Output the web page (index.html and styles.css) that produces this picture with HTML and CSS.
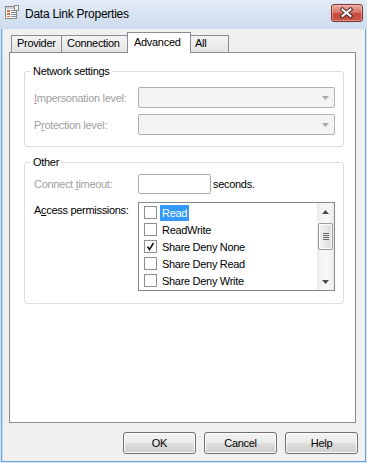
FILE: index.html
```html
<!DOCTYPE html>
<html>
<head>
<meta charset="utf-8">
<title>Data Link Properties</title>
<link rel="stylesheet" href="styles.css">
</head>
<body>
<div class="frame">
  <div class="titlebar">
    <svg class="appicon" width="14" height="14" viewBox="0 0 14 14">
      <rect x="0.5" y="1.5" width="11" height="12" fill="#fdfdfd" stroke="#8a8a8a"/>
      <rect x="1" y="2" width="10" height="2" fill="#c9ced6"/>
      <rect x="2" y="5" width="3" height="2" fill="#e0703a"/>
      <rect x="2" y="8" width="3" height="2" fill="#e0703a"/>
      <rect x="2" y="11" width="3" height="1" fill="#e0703a"/>
      <rect x="6" y="5" width="5" height="1" fill="#7d8ea6"/>
      <rect x="6" y="7" width="5" height="1" fill="#7d8ea6"/>
      <rect x="6" y="9" width="5" height="1" fill="#7d8ea6"/>
      <rect x="6" y="11" width="5" height="1" fill="#7d8ea6"/>
      <rect x="9.5" y="0.5" width="4" height="5" fill="#f4f4f4" stroke="#8a8a8a"/>
    </svg>
    <span class="title">Data Link Properties</span>
    <div class="close">
      <svg width="32" height="18" viewBox="0 0 32 18">
        <path d="M11.5 5.5 L19.5 12 M19.5 5.5 L11.5 12" stroke="#4a2a2a" stroke-width="4" stroke-linecap="square" fill="none"/>
        <path d="M11.5 5.5 L19.5 12 M19.5 5.5 L11.5 12" stroke="#ffffff" stroke-width="2" stroke-linecap="square" fill="none"/>
      </svg>
    </div>
  </div>

  <div class="client">
    <div class="tabs">
      <div class="tab t-provider">Provider</div>
      <div class="tab t-connection">Connection</div>
      <div class="tab active t-advanced">Advanced</div>
      <div class="tab t-all">All</div>
    </div>

    <div class="panel">
      <fieldset class="group g-network">
        <legend>Network settings</legend>
        <div class="gbody gb-network">
          <div class="row">
            <span class="label disabled"><u>I</u>mpersonation level:</span>
            <div class="combo">
              <svg width="7" height="4" viewBox="0 0 7 4"><polygon points="0,0 7,0 3.5,4" fill="#a8a8a8"/></svg>
            </div>
          </div>
          <div class="row">
            <span class="label disabled">P<u>r</u>otection level:</span>
            <div class="combo">
              <svg width="7" height="4" viewBox="0 0 7 4"><polygon points="0,0 7,0 3.5,4" fill="#a8a8a8"/></svg>
            </div>
          </div>
        </div>
      </fieldset>

      <fieldset class="group g-other">
        <legend>Other</legend>
        <div class="gbody gb-other">
          <div class="row row-timeout">
            <span class="label disabled">Connect <u>t</u>imeout:</span>
            <div class="textbox"></div>
            <span class="suffix">seconds.</span>
          </div>
          <div class="row row-access">
            <span class="label">A<u>c</u>cess permissions:</span>
            <div class="listbox">
              <div class="items">
                <div class="item"><span class="cb"></span><span class="text sel">Read</span></div>
                <div class="item"><span class="cb"></span><span class="text">ReadWrite</span></div>
                <div class="item"><span class="cb">
                  <svg width="11" height="11" viewBox="0 0 11 11"><path d="M2.5 5.5 L4.5 8.5 L8.5 2" stroke="#1a1a1a" stroke-width="1.6" fill="none"/></svg>
                </span><span class="text">Share Deny None</span></div>
                <div class="item"><span class="cb"></span><span class="text">Share Deny Read</span></div>
                <div class="item"><span class="cb"></span><span class="text">Share Deny Write</span></div>
              </div>
              <div class="scrollbar">
                <div class="sb-btn">
                  <svg width="7" height="4" viewBox="0 0 7 4"><polygon points="0,4 7,4 3.5,0" fill="#4e4e4e"/></svg>
                </div>
                <div class="thumb">
                  <svg width="6" height="8" viewBox="0 0 6 8">
                    <rect x="0" y="0" width="6" height="1" fill="#6a6a6a"/>
                    <rect x="0" y="2" width="6" height="1" fill="#6a6a6a"/>
                    <rect x="0" y="4" width="6" height="1" fill="#6a6a6a"/>
                    <rect x="0" y="6" width="6" height="1" fill="#6a6a6a"/>
                  </svg>
                </div>
                <div class="sb-track"></div>
                <div class="sb-btn">
                  <svg width="7" height="4" viewBox="0 0 7 4"><polygon points="0,0 7,0 3.5,4" fill="#4e4e4e"/></svg>
                </div>
              </div>
            </div>
          </div>
        </div>
      </fieldset>
    </div>

    <div class="buttons">
      <div class="btn">OK</div>
      <div class="btn">Cancel</div>
      <div class="btn">Help</div>
    </div>
  </div>
</div>
</body>
</html>
```

FILE: styles.css
```css
* { box-sizing: border-box; }

html, body {
  margin: 0;
  padding: 0;
}

body {
  width: 367px;
  height: 463px;
  overflow: hidden;
  background: #ffffff;
  font-family: "Liberation Sans", Arial, sans-serif;
  font-size: 11px;
  letter-spacing: -0.3px;
  color: #000;
}

.frame {
  width: 367px;
  height: 463px;
  display: flex;
  flex-direction: column;
  background: #d9e6f4;
}

/* ---------- title bar ---------- */
.titlebar {
  height: 29px;
  flex: none;
  display: flex;
  align-items: flex-start;
  background: linear-gradient(#e3ecf7, #cddcee);
}

.appicon {
  flex: none;
  margin: 5px 0 0 5px;
}

.title {
  margin: 7px 0 0 6px;
  font-size: 12px;
  letter-spacing: -0.25px;
  line-height: 15px;
  color: #000;
}

.close {
  flex: none;
  width: 32px;
  height: 18px;
  margin: 4px 4px 0 auto;
  border: 1px solid #7b3530;
  border-radius: 3px;
  overflow: hidden;
  background: linear-gradient(#e9a99c 0%, #d77a6d 45%, #c8483b 55%, #c85545 100%);
  box-shadow: inset 0 0 0 1px rgba(255, 220, 210, 0.45);
}

.close svg {
  display: block;
  margin: -1px 0 0 -1px;
}

/* ---------- client ---------- */
.client {
  flex: 1;
  margin: 0 1px 1px 1px;
  border: 1px solid #6aa1d8;
  border-top: 0;
  background: #f0f0f0;
  box-shadow: inset 1px 0 0 #c2d9f1;
  padding: 3px 7px 7px 7px;
  display: flex;
  flex-direction: column;
}

.tabs {
  height: 20px;
  flex: none;
  display: flex;
  align-items: flex-end;
  padding-left: 2px;
  position: relative;
  z-index: 1;
}

.tab {
  height: 17px;
  border: 1px solid #898c95;
  border-bottom: 0;
  margin-left: -1px;
  padding-left: 5px;
  line-height: 15px;
  white-space: nowrap;
  background: linear-gradient(#f4f4f4, #e4e4e4);
}

.t-provider { width: 51px; margin-left: 0; }
.t-connection { width: 67px; }
.t-advanced { width: 64px; padding-left: 6px; }
.t-all { width: 39px; padding-left: 4px; }

.tab.active {
  height: 21px;
  margin-bottom: -1px;
  line-height: 18px;
  background: #ffffff;
  position: relative;
  z-index: 2;
}

.panel {
  width: 347px;
  height: 371px;
  flex: none;
  border: 1px solid #898c95;
  background: #ffffff;
}

/* ---------- group boxes ---------- */
.group {
  margin: 0;
  padding: 0;
  min-width: 0;
  border: 1px solid #d5dfe5;
  border-radius: 3px;
}

.group legend {
  margin-left: 6px;
  padding: 0 2px;
  line-height: 14px;
  color: #000;
}

.g-network { margin: 11px 11px 0 14px; }
.g-other { margin: 8px 11px 0 14px; }

.gbody {
  display: flex;
  flex-direction: column;
}

.gb-network {
  gap: 6px;
  padding: 9px 8px 11px 9px;
}

.gb-other {
  gap: 8px;
  padding: 5px 8px 12px 9px;
}

.row {
  display: flex;
  align-items: center;
}

.row-access { align-items: flex-start; }

.label {
  width: 104px;
  flex: none;
  line-height: 14px;
  white-space: nowrap;
}

.row-access .label { margin-top: 1px; }

.disabled { color: #a0a0a0; }

.combo {
  width: 197px;
  height: 21px;
  border: 1px solid #afb1b4;
  border-radius: 2px;
  background: #f4f4f4;
  display: flex;
  align-items: center;
  justify-content: flex-end;
  padding-right: 5px;
}

.combo svg { display: block; }

.textbox {
  width: 73px;
  height: 20px;
  border: 1px solid #abadb3;
  border-radius: 2px;
  background: #ffffff;
}

.suffix {
  margin-left: 2px;
  line-height: 14px;
}

/* ---------- list ---------- */
.listbox {
  width: 197px;
  height: 89px;
  border: 1px solid #828790;
  background: #ffffff;
  display: flex;
}

.items {
  flex: 1;
  padding-top: 1px;
}

.item {
  height: 17px;
  display: flex;
  align-items: center;
  padding-left: 5px;
}

.cb {
  width: 13px;
  height: 13px;
  flex: none;
  border: 1px solid #8e8f8f;
  background: #ffffff;
  display: flex;
  align-items: center;
  justify-content: center;
}

.cb svg { display: block; }

.item .text {
  margin-left: 3px;
  padding: 0 2px;
  line-height: 16px;
  white-space: nowrap;
}

.item .text.sel {
  background: #3399ff;
  color: #ffffff;
}

.scrollbar {
  width: 17px;
  flex: none;
  display: flex;
  flex-direction: column;
  background: linear-gradient(90deg, #eaeaea, #f6f6f6 30%, #f6f6f6 70%, #eaeaea);
}

.sb-btn {
  height: 17px;
  flex: none;
  display: flex;
  align-items: center;
  justify-content: center;
}

.sb-btn svg { display: block; }

.thumb {
  height: 27px;
  flex: none;
  margin: 3px 1px 0 1px;
  border: 1px solid #9a9a9a;
  border-radius: 2px;
  background: linear-gradient(90deg, #f3f3f3, #e9e9e9 50%, #d9d9d9);
  box-shadow: inset 0 0 0 1px #fbfbfb;
  display: flex;
  align-items: center;
  justify-content: center;
}

.thumb svg { display: block; }

.sb-track { flex: 1; }

/* ---------- buttons ---------- */
.buttons {
  flex: none;
  margin-top: 9px;
  display: flex;
  justify-content: flex-end;
  gap: 8px;
}

.btn {
  width: 73px;
  height: 22px;
  border: 1px solid #707070;
  border-radius: 3px;
  background: linear-gradient(#f2f2f2 0%, #ebebeb 50%, #dddddd 51%, #cfcfcf 100%);
  box-shadow: inset 0 0 0 1px #fcfcfc;
  text-align: center;
  line-height: 20px;
}
```
